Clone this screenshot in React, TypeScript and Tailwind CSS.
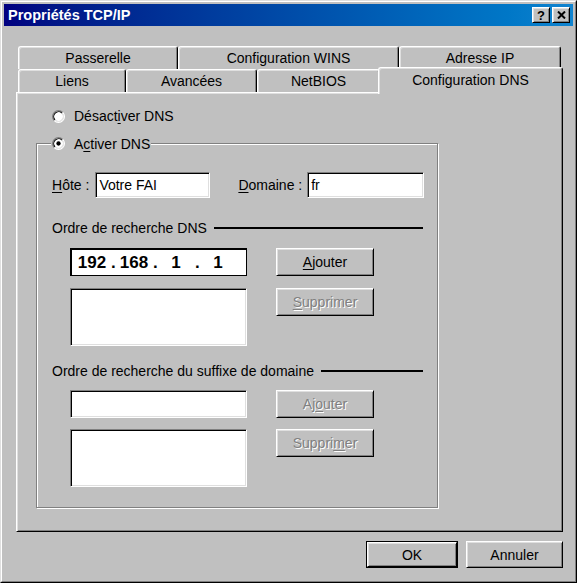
import React from 'react';

const raised =
  'border border-t-white border-l-white border-r-black border-b-black shadow-[inset_1px_1px_#dfdfdf,inset_-1px_-1px_#808080]';
const sunken =
  'bg-white border border-t-[#808080] border-l-[#808080] border-r-white border-b-white shadow-[inset_1px_1px_#000,inset_-1px_-1px_#dfdfdf]';

function Radio({ checked }: { checked?: boolean }) {
  return (
    <svg width="13" height="13" viewBox="0 0 12 12" className="shrink-0">
      <circle cx="6" cy="6" r="5" fill="#fff" />
      <path d="M2.11 9.89 A5.5 5.5 0 0 1 9.89 2.11" stroke="#808080" fill="none" />
      <path d="M2.82 9.18 A4.5 4.5 0 0 1 9.18 2.82" stroke="#000" fill="none" />
      <path d="M9.89 2.11 A5.5 5.5 0 0 1 2.11 9.89" stroke="#fff" fill="none" />
      <path d="M9.18 2.82 A4.5 4.5 0 0 1 2.82 9.18" stroke="#dfdfdf" fill="none" />
      {checked && <circle cx="6" cy="6" r="2" fill="#000" />}
    </svg>
  );
}

function Btn({ children, disabled, className = '' }: { children: React.ReactNode; disabled?: boolean; className?: string }) {
  return (
    <div
      className={`${raised} ${className} flex items-center justify-center bg-[#c0c0c0] whitespace-nowrap ${
        disabled ? 'text-[#808080] [text-shadow:1px_1px_0_#fff]' : 'text-black'
      }`}
    >
      {children}
    </div>
  );
}

function Tab({ label, className = '' }: { label: string; className?: string }) {
  return (
    <div
      className={`${className} h-full flex items-center justify-center bg-[#c0c0c0] border-t border-l border-r border-t-white border-l-white border-r-black rounded-t-[3px] shadow-[inset_1px_1px_#dfdfdf,inset_-1px_0_#808080]`}
    >
      {label}
    </div>
  );
}

function IpField({ value }: { value: string }) {
  return <div className="w-[38px] text-center">{value}</div>;
}

export default function App() {
  return (
    <div className="w-[577px] h-[583px] bg-[#c0c0c0] border border-t-[#dfdfdf] border-l-[#dfdfdf] border-r-black border-b-black font-['Liberation_Sans',Arial,sans-serif] text-[14px] leading-[16px] text-black">
      <div className="h-full flex flex-col border border-t-white border-l-white border-r-[#808080] border-b-[#808080] p-[2px]">
        {/* Title bar */}
        <div className="h-[22px] shrink-0 flex items-center bg-linear-to-r from-[#000080] to-[#1084d0] pl-[4px] pr-[3px]">
          <span className="flex-1 text-white font-bold text-[14.5px]">Propriétés TCP/IP</span>
          <div className={`${raised} w-[18px] h-[16px] bg-[#c0c0c0] flex items-center justify-center font-bold text-[13px] leading-none`}>
            ?
          </div>
          <div className={`${raised} ml-[2px] w-[18px] h-[16px] bg-[#c0c0c0] flex items-center justify-center`}>
            <svg width="9" height="8" viewBox="0 0 9 8">
              <path d="M1 0.5 L8 7.5 M8 0.5 L1 7.5" stroke="#000" strokeWidth="2" />
            </svg>
          </div>
        </div>

        {/* Body */}
        <div className="flex-1 flex flex-col pl-[12px] pr-[10px] pt-[20px]">
          {/* Tabs */}
          <div className="px-[2px]">
            <div className="flex h-[23px]">
              <Tab label="Passerelle" className="w-[160px]" />
              <Tab label="Configuration WINS" className="w-[221px]" />
              <Tab label="Adresse IP" className="w-[162px]" />
            </div>
            <div className="flex h-[23px] items-start">
              <Tab label="Liens" className="w-[108px]" />
              <Tab label="Avancées" className="w-[131px]" />
              <Tab label="NetBIOS" className="w-[123px]" />
              <div className="relative z-10 -mx-[2px] -mt-[2px] w-[185px] h-[27px] pb-[3px] flex items-center justify-center bg-[#c0c0c0] border-t border-l border-r border-t-white border-l-white border-r-black rounded-t-[3px] shadow-[inset_1px_1px_#dfdfdf,inset_-1px_0_#808080]">
                Configuration DNS
              </div>
            </div>
          </div>

          {/* Panel */}
          <div className={`${raised} h-[440px] pt-[15px]`}>
            <div className="ml-[35px] flex items-center h-[16px]">
              <Radio />
              <span className="ml-[9px]">
                Désact<span className="underline underline-offset-[2px]">i</span>ver DNS
              </span>
            </div>

            <div className="relative ml-[19px] mt-[19px] w-[402px] border border-[#808080] shadow-[inset_1px_1px_#fff,1px_1px_#fff] pl-[15px] pr-[14px] pb-[20px]">
              <div className="absolute left-[14px] -top-[9px] h-[17px] px-[1px] flex items-center bg-[#c0c0c0]">
                <Radio checked />
                <span className="ml-[9px]">
                  A<span className="underline underline-offset-[2px]">c</span>tiver DNS
                </span>
              </div>

              <div className="mt-[28px] flex h-[26px] items-center whitespace-nowrap">
                <span className="shrink-0">
                  <span className="underline underline-offset-[2px]">H</span>ôte :
                </span>
                <div className={`${sunken} ml-[6px] w-[115px] shrink-0 h-full flex items-center pl-[3px]`}>Votre FAI</div>
                <span className="ml-[28px] shrink-0">
                  <span className="underline underline-offset-[2px]">D</span>omaine :
                </span>
                <div className={`${sunken} ml-[5px] w-[117px] shrink-0 h-full flex items-center pl-[3px]`}>fr</div>
              </div>

              <div className="mt-[22px] flex h-[16px] items-center">
                <span className="whitespace-nowrap">Ordre de recherche DNS</span>
                <div className="ml-[7px] flex-1 h-[2px] bg-black" />
              </div>

              <div className="mt-[12px] flex h-[28px]">
                <div className="ml-[18px] w-[177px] h-full bg-white border-t-2 border-l-2 border-r border-b border-black flex items-center pl-[1px] font-bold text-[17px]">
                  <IpField value="192" />
                  <div className="w-[4px] text-center">.</div>
                  <IpField value="168" />
                  <div className="w-[4px] text-center">.</div>
                  <IpField value="1" />
                  <div className="w-[4px] text-center">.</div>
                  <IpField value="1" />
                </div>
                <Btn className="ml-[29px] w-[98px] h-full">
                  <span>
                    <span className="underline underline-offset-[2px]">A</span>jouter
                  </span>
                </Btn>
              </div>

              <div className="mt-[12px] flex items-start">
                <div className={`${sunken} ml-[18px] w-[177px] h-[58px]`} />
                <Btn disabled className="ml-[29px] w-[98px] h-[28px]">
                  <span>
                    <span className="underline underline-offset-[2px]">S</span>upprimer
                  </span>
                </Btn>
              </div>

              <div className="mt-[17px] flex h-[16px] items-center">
                <span className="whitespace-nowrap">Ordre de recherche du suffixe de domaine</span>
                <div className="ml-[7px] flex-1 h-[2px] bg-black" />
              </div>

              <div className="mt-[11px] flex h-[28px]">
                <div className={`${sunken} ml-[18px] w-[177px] h-full`} />
                <Btn disabled className="ml-[29px] w-[98px] h-full">
                  <span>
                    Aj<span className="underline underline-offset-[2px]">o</span>uter
                  </span>
                </Btn>
              </div>

              <div className="mt-[11px] flex items-start">
                <div className={`${sunken} ml-[18px] w-[177px] h-[58px]`} />
                <Btn disabled className="ml-[29px] w-[98px] h-[28px]">
                  <span>
                    Suppri<span className="underline underline-offset-[2px]">m</span>er
                  </span>
                </Btn>
              </div>
            </div>
          </div>

          {/* Footer */}
          <div className="mt-[9px] flex justify-end gap-[8px]">
            <div className="border border-black">
              <Btn className="w-[90px] h-[25px]">OK</Btn>
            </div>
            <Btn className="w-[97px] h-[27px]">Annuler</Btn>
          </div>
        </div>
      </div>
    </div>
  );
}
